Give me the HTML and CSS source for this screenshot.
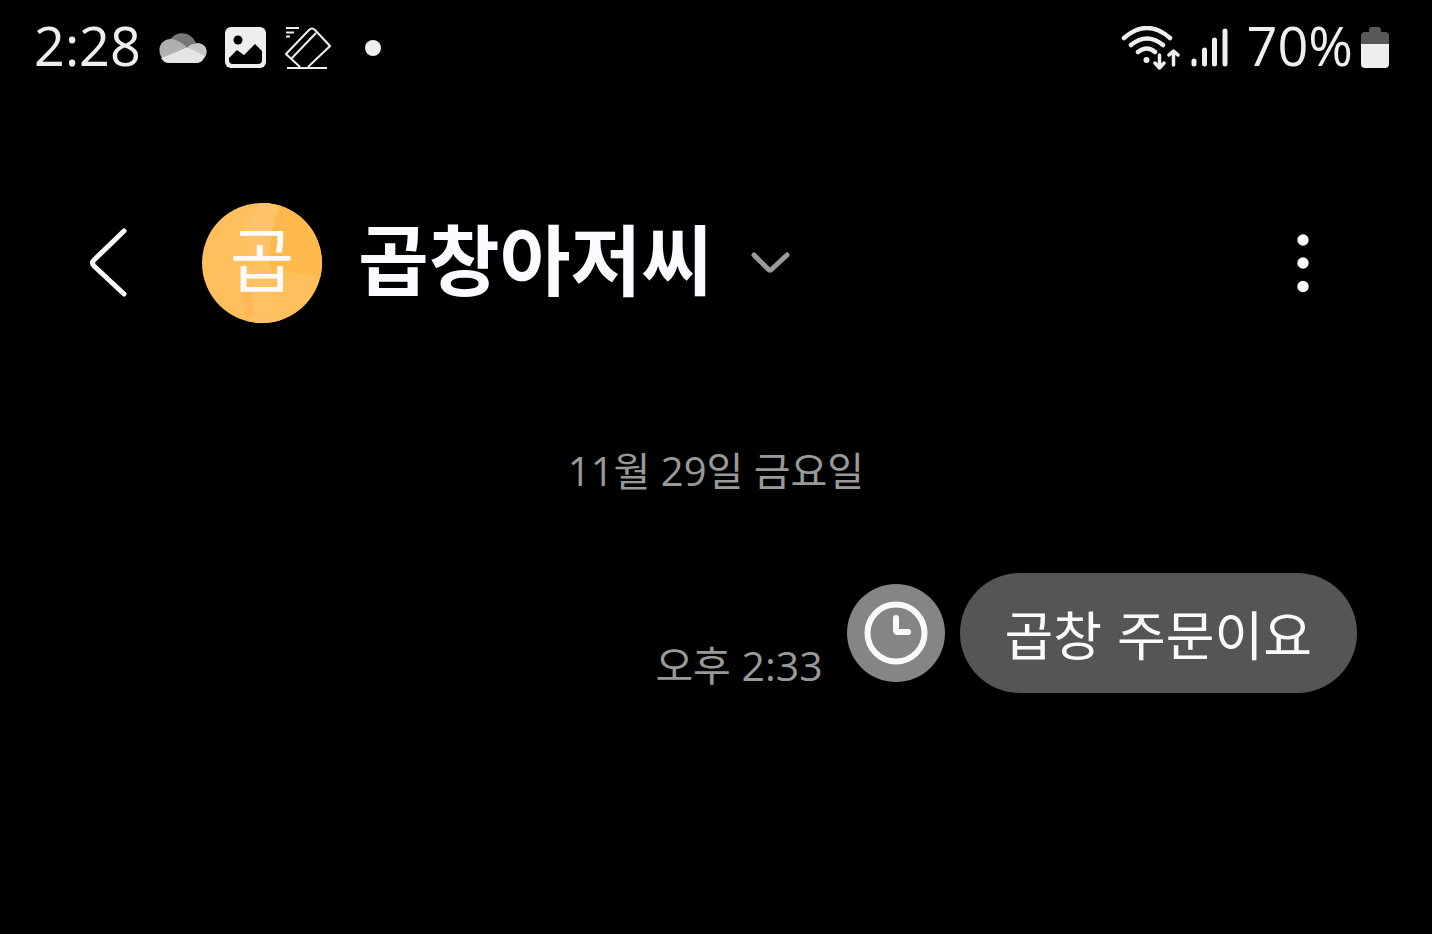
FILE: index.html
```html
<!DOCTYPE html>
<html lang="ko">
<head>
  <meta charset="UTF-8">
  <meta name="viewport" content="width=device-width, initial-scale=1.0">
  <title>곱창아저씨</title>
  <link rel="stylesheet" href="styles.css">
</head>
<body>
  <div class="status-bar">
    <div class="status-left">
      <span class="clock">2:28</span>
      <svg class="cloud" width="48" height="32" viewBox="0 0 48 32">
        <path d="M11 8C16-1 31-2 37 11L27 15Z" fill="#777"/>
        <path d="M3 26C-3 17 2 7 12 7C16 7 20 9 28 15Z" fill="#b0b0b0"/>
        <path d="M28 15C32 12 36 11 39 11C48 12 50 21 45 26Z" fill="#c6c6c6"/>
        <path d="M28 15L46 24C44 29 41 31 38 31H10C6 31 4 29 2 26Z" fill="#e4e4e4"/>
      </svg>
      <svg class="photo" width="42" height="42" viewBox="0 0 42 42">
        <rect width="41" height="41" rx="6" fill="#eee"/>
        <circle cx="13" cy="13" r="4.500" fill="#000"/>
        <path d="M4 31L12 23L19 28L30 17L37 24V33Q37 37 33 37H8Q4 37 4 33Z" fill="#000"/>
      </svg>
      <svg class="eraser" width="46" height="44" viewBox="0 0 46 44" fill="none" stroke="#eee" stroke-width="2">
        <path d="M1 2H14M1 6.500H9M1 10.500H5M2 42H42"/>
        <path d="M15 41L1 28L24 4Q27 1 30 4L45 20L23 41M6 33L31 7"/>
      </svg>
      <span class="dot"></span>
    </div>
    <div class="status-right">
      <svg class="wifi" width="60" height="44" viewBox="0 0 60 44" fill="none" stroke="#eee" stroke-width="4.500" stroke-linecap="round" stroke-linejoin="round">
        <path d="M3 12Q26-8 49 12M10 19Q26 6 42 19M17 26Q26 19 34 26"/>
        <circle cx="25.500" cy="34" r="3" fill="#eee" stroke="none"/>
        <path d="M38.500 29V42M34 37L38.500 42L43 37M52.500 39V26M48 29L52.500 25L57 29" stroke-width="3.500"/>
      </svg>
      <svg class="signal" width="38" height="42" viewBox="0 0 38 42" stroke="#eee" stroke-width="5" stroke-linecap="round">
        <path d="M3 34V37M13.500 23V37M23.500 13V37M34 4V37"/>
      </svg>
      <span class="percent">70%</span>
      <svg class="battery" width="28" height="42" viewBox="0 0 28 42">
        <path d="M8 5V3Q8 0 11 0H17Q20 0 20 3V5H24Q28 5 28 9V17H0V9Q0 5 4 5Z" fill="#585858"/>
        <path d="M0 17H28V37Q28 41 24 41H4Q0 41 0 37Z" fill="#eee"/>
      </svg>
    </div>
  </div>

  <header class="chat-header">
    <button class="back" type="button" aria-label="뒤로">
      <svg width="40" height="70" viewBox="0 0 40 70" fill="none" stroke="#fcfaff" stroke-width="5" stroke-linecap="round" stroke-linejoin="round">
        <path d="M35 3L5 32Q2 35 5 38L35 66"/>
      </svg>
    </button>
    <button class="contact" type="button">
      <span class="avatar">
        <svg class="avatar-bg" width="120" height="120" viewBox="0 0 120 120">
          <rect width="120" height="120" fill="#ffbf5c"/>
          <path d="M58 0H78Q66 34 67 65Q68 94 82 120H45Q58 102 47 88Q35 55 42 25Z" fill="#ffc161"/>
          <path d="M58 0H78Q66 34 67 65L40 30Z" fill="#ffc46a"/>
          <path d="M78 0Q66 34 67 65L120 75V0Z" fill="#ffb94c"/>
          <path d="M45 120Q57 103 47 88L40 80Q40 100 45 120Z" fill="#ffb959"/>
        </svg>
        <span class="avatar-text">곱</span>
      </span>
      <span class="name">곱창아저씨</span>
      <svg class="chevron" width="40" height="24" viewBox="0 0 40 24" fill="none" stroke="#9a999d" stroke-width="5" stroke-linecap="round" stroke-linejoin="round">
        <path d="M4 4L18 18Q20 20 22 18L37 4"/>
      </svg>
    </button>
    <button class="more" type="button" aria-label="더보기">
      <svg width="12" height="60" viewBox="0 0 12 60" fill="#fcfaff">
        <circle cx="6" cy="7" r="5.700"/>
        <circle cx="6" cy="30" r="5.700"/>
        <circle cx="6" cy="53.500" r="5.700"/>
      </svg>
    </button>
  </header>

  <main class="messages">
    <p class="date">11월 29일 금요일</p>
    <div class="message">
      <time class="time">오후 2:33</time>
      <button class="scheduled" type="button" aria-label="예약된 메시지">
        <svg width="64" height="64" viewBox="0 0 64 64" fill="none" stroke="#fafafa" stroke-width="6" stroke-linecap="round" stroke-linejoin="round">
          <circle cx="32" cy="32" r="28.500"/>
          <path d="M32 17V29Q32 31 34 31H44"/>
        </svg>
      </button>
      <p class="bubble">곱창 주문이요</p>
    </div>
  </main>
</body>
</html>
```
FILE: styles.css
```css
* {
  box-sizing: border-box;
}

body {
  margin: 0;
  min-height: 100vh;
  background: #000;
  color: #fcfaff;
  font-family: 'Noto Sans CJK KR', sans-serif;
}

button {
  display: flex;
  align-items: center;
  padding: 0;
  border: none;
  background: none;
  color: inherit;
  font-family: inherit;
  cursor: pointer;
}

svg {
  display: block;
  flex-shrink: 0;
}

p {
  margin: 0;
}

/* status bar */
.status-bar {
  display: flex;
  justify-content: space-between;
  align-items: center;
  height: 96px;
  padding: 0 43px 0 34px;
  color: #eee;
  font-family: 'Open Sans', 'Noto Sans CJK KR', sans-serif;
  font-size: 54px;
  line-height: 80px;
}

.status-left,
.status-right {
  display: flex;
  align-items: center;
}

.clock,
.percent {
  padding-bottom: 6px;
}

.cloud {
  margin-left: 18px;
}

.photo {
  margin-left: 18px;
}

.eraser {
  margin-left: 18px;
}

.dot {
  width: 16px;
  height: 16px;
  margin-left: 34px;
  border-radius: 50%;
  background: #eee;
}

.signal {
  margin-left: 10px;
}

.percent {
  margin-left: 18px;
}

.battery {
  margin-left: 8px;
}

/* header */
.chat-header {
  display: flex;
  align-items: center;
  padding: 107px 123px 0 89px;
}

.contact {
  margin-left: 73px;
}

.avatar {
  position: relative;
  display: flex;
  justify-content: center;
  align-items: center;
  width: 120px;
  height: 120px;
  border-radius: 50%;
  overflow: hidden;
}

.avatar-bg {
  position: absolute;
  inset: 0;
}

.avatar-text {
  position: relative;
  padding-bottom: 12px;
  font-size: 70px;
  line-height: 108px;
}

.name {
  margin-left: 36px;
  padding-bottom: 12px;
  font-size: 77px;
  font-weight: 700;
  line-height: 108px;
}

.chevron {
  margin-left: 38px;
}

.more {
  margin-left: auto;
}

/* messages */
.messages {
  padding: 120px 75px 0;
}

.date,
.time {
  color: #999;
  font-family: 'Open Sans', 'Noto Sans CJK KR', sans-serif;
  line-height: 56px;
}

.date {
  font-size: 40px;
  text-align: center;
}

.message {
  display: flex;
  justify-content: flex-end;
  align-items: center;
  margin-top: 74px;
}

.time {
  align-self: flex-end;
  margin-right: 24px;
  font-size: 41px;
}

.scheduled {
  justify-content: center;
  width: 98px;
  height: 98px;
  margin-right: 15px;
  border-radius: 50%;
  background: #858585;
}

.bubble {
  padding: 0 45px;
  border-radius: 60px;
  background: #555;
  color: #fafafa;
  font-size: 53px;
  line-height: 120px;
}
```
